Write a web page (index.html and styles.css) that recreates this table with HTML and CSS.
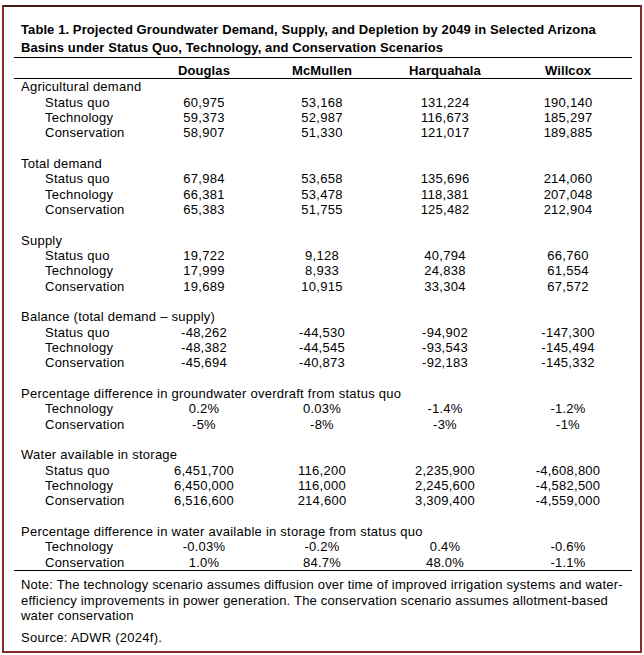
FILE: index.html
```html
<!DOCTYPE html>
<html>
<head>
<meta charset="utf-8">
<link rel="stylesheet" href="styles.css">
</head>
<body>
<div class="frame">
  <div class="title">Table 1. Projected Groundwater Demand, Supply, and Depletion by 2049 in Selected Arizona Basins under Status Quo, Technology, and Conservation Scenarios</div>
  <table class="data">
    <colgroup>
      <col class="c-label"><col class="c-doug"><col class="c-mcm"><col class="c-harq"><col class="c-will">
    </colgroup>
    <thead>
      <tr class="head"><th></th><th>Douglas</th><th>McMullen</th><th>Harquahala</th><th>Willcox</th></tr>
    </thead>
    <tbody>
      <tr><td class="grp" colspan="5">Agricultural demand</td></tr>
      <tr><td class="sub">Status quo</td><td>60,975</td><td>53,168</td><td>131,224</td><td>190,140</td></tr>
      <tr><td class="sub">Technology</td><td>59,373</td><td>52,987</td><td>116,673</td><td>185,297</td></tr>
      <tr><td class="sub">Conservation</td><td>58,907</td><td>51,330</td><td>121,017</td><td>189,885</td></tr>
      <tr class="blank"><td colspan="5"></td></tr>
      <tr><td class="grp" colspan="5">Total demand</td></tr>
      <tr><td class="sub">Status quo</td><td>67,984</td><td>53,658</td><td>135,696</td><td>214,060</td></tr>
      <tr><td class="sub">Technology</td><td>66,381</td><td>53,478</td><td>118,381</td><td>207,048</td></tr>
      <tr><td class="sub">Conservation</td><td>65,383</td><td>51,755</td><td>125,482</td><td>212,904</td></tr>
      <tr class="blank"><td colspan="5"></td></tr>
      <tr><td class="grp" colspan="5">Supply</td></tr>
      <tr><td class="sub">Status quo</td><td>19,722</td><td>9,128</td><td>40,794</td><td>66,760</td></tr>
      <tr><td class="sub">Technology</td><td>17,999</td><td>8,933</td><td>24,838</td><td>61,554</td></tr>
      <tr><td class="sub">Conservation</td><td>19,689</td><td>10,915</td><td>33,304</td><td>67,572</td></tr>
      <tr class="blank"><td colspan="5"></td></tr>
      <tr><td class="grp" colspan="5">Balance (total demand – supply)</td></tr>
      <tr><td class="sub">Status quo</td><td>-48,262</td><td>-44,530</td><td>-94,902</td><td>-147,300</td></tr>
      <tr><td class="sub">Technology</td><td>-48,382</td><td>-44,545</td><td>-93,543</td><td>-145,494</td></tr>
      <tr><td class="sub">Conservation</td><td>-45,694</td><td>-40,873</td><td>-92,183</td><td>-145,332</td></tr>
      <tr class="blank"><td colspan="5"></td></tr>
      <tr><td class="grp" colspan="5">Percentage difference in groundwater overdraft from status quo</td></tr>
      <tr><td class="sub">Technology</td><td>0.2%</td><td>0.03%</td><td>-1.4%</td><td>-1.2%</td></tr>
      <tr><td class="sub">Conservation</td><td>-5%</td><td>-8%</td><td>-3%</td><td>-1%</td></tr>
      <tr class="blank"><td colspan="5"></td></tr>
      <tr><td class="grp" colspan="5">Water available in storage</td></tr>
      <tr><td class="sub">Status quo</td><td>6,451,700</td><td>116,200</td><td>2,235,900</td><td>-4,608,800</td></tr>
      <tr><td class="sub">Technology</td><td>6,450,000</td><td>116,000</td><td>2,245,600</td><td>-4,582,500</td></tr>
      <tr><td class="sub">Conservation</td><td>6,516,600</td><td>214,600</td><td>3,309,400</td><td>-4,559,000</td></tr>
      <tr class="blank"><td colspan="5"></td></tr>
      <tr><td class="grp" colspan="5">Percentage difference in water available in storage from status quo</td></tr>
      <tr><td class="sub">Technology</td><td>-0.03%</td><td>-0.2%</td><td>0.4%</td><td>-0.6%</td></tr>
      <tr class="last"><td class="sub">Conservation</td><td>1.0%</td><td>84.7%</td><td>48.0%</td><td>-1.1%</td></tr>
    </tbody>
  </table>
  <p class="note">Note: The technology scenario assumes diffusion over time of improved irrigation systems and water-<br>efficiency improvements in power generation. The conservation scenario assumes allotment-based<br>water conservation</p>
  <p class="source">Source: ADWR (2024f).</p>
</div>
</body>
</html>
```

FILE: styles.css
```css
html, body {
  margin: 0;
  padding: 0;
  background: #ffffff;
}

body {
  font-family: "Liberation Sans", Arial, sans-serif;
  font-size: 13px;
  color: #000000;
  letter-spacing: 0.25px;
}

.frame {
  box-sizing: border-box;
  margin: 5px 0 0 2px;
  width: 640px;
  height: 648px;
  border: 2px solid #8a2a2a;
  border-top-color: #4a1a1a;
  padding: 14px 8px 0 10px;
}

.title {
  font-weight: bold;
  letter-spacing: 0.09px;
  line-height: 18px;
  padding: 0 7px 0 7px;
  border-bottom: 1px solid #000000;
}

.data {
  width: 618px;
  border-collapse: collapse;
  table-layout: fixed;
}

.c-label { width: 136px; }
.c-doug { width: 108px; }
.c-mcm { width: 128px; }
.c-harq { width: 118px; }
.c-will { width: 128px; }

.data th {
  font-weight: bold;
  letter-spacing: 0.1px;
  text-align: center;
  line-height: 15px;
  padding: 5px 0 0;
  border-bottom: 1px solid #000000;
}

.data td {
  padding: 0;
  height: 15.35px;
  line-height: 15px;
  text-align: center;
  white-space: nowrap;
}

.data td.grp {
  text-align: left;
  padding-left: 7px;
}

.data td.sub {
  text-align: left;
  padding-left: 31px;
}

.data tr.last td {
  border-bottom: 1px solid #000000;
}

.note {
  margin: 6px 0 0;
  padding: 0 0 0 7px;
  line-height: 15.5px;
  letter-spacing: 0.2px;
  white-space: nowrap;
}

.source {
  margin: 6px 0 0;
  padding: 0 7px;
  line-height: 15.5px;
}
```
